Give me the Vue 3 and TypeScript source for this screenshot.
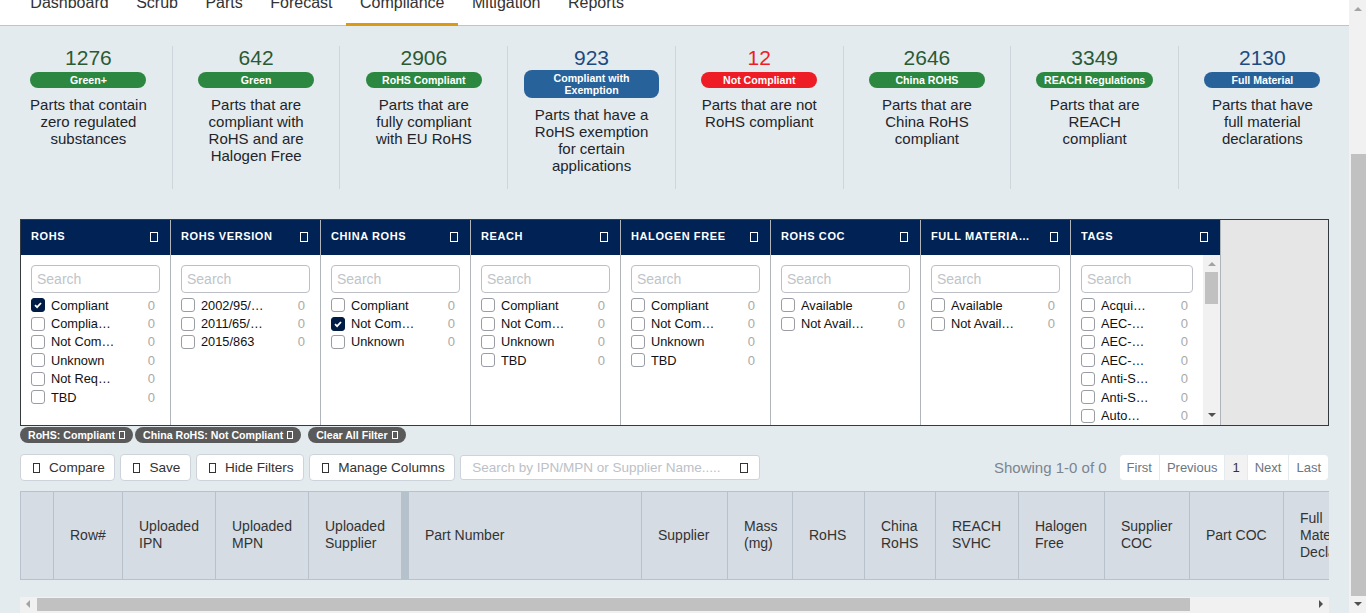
<script setup lang="ts">
interface Stat {
  count: number
  label: string
  text: string
  tone: 'green' | 'blue' | 'red'
  wide?: boolean
}

interface Filter {
  title: string
  options: string[]
  checked?: string
}

const tabs = ['Dashboard', 'Scrub', 'Parts', 'Forecast', 'Compliance', 'Mitigation', 'Reports']

const stats: Stat[] = [
  { count: 1276, label: 'Green+', text: 'Parts that contain zero regulated substances', tone: 'green' },
  { count: 642, label: 'Green', text: 'Parts that are compliant with RoHS and are Halogen Free', tone: 'green' },
  { count: 2906, label: 'RoHS Compliant', text: 'Parts that are fully compliant with EU RoHS', tone: 'green' },
  { count: 923, label: 'Compliant with Exemption', text: 'Parts that have a RoHS exemption for certain applications', tone: 'blue', wide: true },
  { count: 12, label: 'Not Compliant', text: 'Parts that are not RoHS compliant', tone: 'red' },
  { count: 2646, label: 'China ROHS', text: 'Parts that are China RoHS compliant', tone: 'green' },
  { count: 3349, label: 'REACH Regulations', text: 'Parts that are REACH compliant', tone: 'green' },
  { count: 2130, label: 'Full Material', text: 'Parts that have full material declarations', tone: 'blue' }
]

const complianceOptions = ['Compliant', 'Not Compliant', 'Unknown', 'TBD']
const availability = ['Available', 'Not Available']

const filters: Filter[] = [
  {
    title: 'RoHS',
    options: ['Compliant', 'Compliant with Exemption', 'Not Compliant', 'Unknown', 'Not Required', 'TBD'],
    checked: 'Compliant'
  },
  { title: 'RoHS Version', options: ['2002/95/EC', '2011/65/EU', '2015/863'] },
  { title: 'China RoHS', options: ['Compliant', 'Not Compliant', 'Unknown'], checked: 'Not Compliant' },
  { title: 'REACH', options: complianceOptions },
  { title: 'Halogen Free', options: complianceOptions },
  { title: 'RoHS COC', options: availability },
  { title: 'Full Material Declaration', options: availability },
  {
    title: 'Tags',
    options: ['Acquisition', 'AEC-Q100', 'AEC-Q101', 'AEC-Q200', 'Anti-Static', 'Anti-Surge', 'Automotive']
  }
]

const chips = [
  { label: 'RoHS: Compliant', clear: false },
  { label: 'China RoHS: Not Compliant', clear: false },
  { label: 'Clear All Filter', clear: true }
]

const actions = ['Compare', 'Save', 'Hide Filters', 'Manage Columns']

const pages = ['First', 'Previous', '1', 'Next', 'Last']

const columns = [
  '',
  'Row#',
  'Uploaded IPN',
  'Uploaded MPN',
  'Uploaded Supplier',
  'Part Number',
  'Supplier',
  'Mass (mg)',
  'RoHS',
  'China RoHS',
  'REACH SVHC',
  'Halogen Free',
  'Supplier COC',
  'Part COC',
  'Full Material Declaration'
]
</script>

<template>
  <div class="page">
    <div class="main">
      <nav class="tabs">
        <a v-for="tab in tabs" :key="tab" class="tab" :class="{ active: tab === 'Compliance' }">{{ tab }}</a>
      </nav>

      <section class="stats">
        <div v-for="stat in stats" :key="stat.label" class="stat">
          <div class="stat-count" :class="`count-${stat.tone}`">{{ stat.count }}</div>
          <div class="stat-badge" :class="[`badge-${stat.tone}`, { wide: stat.wide }]">{{ stat.label }}</div>
          <p class="stat-text">{{ stat.text }}</p>
        </div>
      </section>

      <section class="filters">
        <div v-for="filter in filters" :key="filter.title" class="filter">
          <header class="filter-head">
            <span class="filter-title">{{ filter.title }}</span>
            <span class="tofu"></span>
          </header>
          <div class="filter-body">
            <div class="filter-list">
              <input class="filter-search" type="text" placeholder="Search" />
              <label v-for="option in filter.options" :key="option" class="option">
                <span class="check" :class="{ on: option === filter.checked }">
                  <svg v-if="option === filter.checked" viewBox="0 0 12 12" width="12" height="12">
                    <path d="M3 6.2 5.1 8.2 9 4" fill="none" stroke="#fff" stroke-width="1.8" />
                  </svg>
                </span>
                <span class="option-name">{{ option }}</span>
                <span class="option-count">0</span>
              </label>
            </div>
            <div v-if="filter.title === 'Tags'" class="mini-bar">
              <span class="arrow up"></span>
              <span class="mini-thumb"></span>
              <span class="arrow down"></span>
            </div>
          </div>
        </div>
      </section>

      <div class="chips">
        <span v-for="chip in chips" :key="chip.label" class="chip" :class="{ clear: chip.clear }">
          {{ chip.label }}<span class="tofu small"></span>
        </span>
      </div>

      <div class="toolbar">
        <button v-for="action in actions" :key="action" class="action" type="button">
          <span class="tofu dark"></span>{{ action }}
        </button>
        <div class="part-search">
          <span class="part-search-text">Search by IPN/MPN or Supplier Name.....</span>
          <span class="tofu dark"></span>
        </div>
        <span class="showing">Showing 1-0 of 0</span>
        <div class="pager">
          <span v-for="page in pages" :key="page" class="page-link" :class="{ current: page === '1' }">{{ page }}</span>
        </div>
      </div>

      <div class="grid-wrap">
        <div class="grid-head">
          <div v-for="(col, i) in columns" :key="i" class="grid-cell">
            <span>{{ col }}</span>
          </div>
        </div>
      </div>

      <div class="h-scroll">
        <span class="arrow left"></span>
        <span class="h-thumb"></span>
        <span class="arrow right"></span>
      </div>
    </div>

    <div class="v-scroll">
      <span class="arrow up"></span>
      <span class="v-thumb"></span>
      <span class="arrow down"></span>
    </div>
  </div>
</template>

<style>
html,
body {
  margin: 0;
  overflow: hidden;
  background: #e4ebef;
}
</style>

<style scoped>
.page {
  display: flex;
  width: 1366px;
  height: 613px;
  overflow: hidden;
  font-family: "Liberation Sans", Arial, sans-serif;
  color: #212529;
  background: #e4ebef;
}

.main {
  width: 1349px;
  flex: none;
}

/* nav is scrolled most of the way out of view */
.tabs {
  display: flex;
  align-items: flex-end;
  box-sizing: border-box;
  height: 26px;
  padding-left: 16.6px;
  background: #fff;
  box-shadow: inset 0 -1px 0 #bcc4ce;
  overflow: hidden;
}

.tab {
  box-sizing: border-box;
  height: 42px;
  line-height: 38px;
  padding: 0 13.75px;
  font-size: 16px;
  color: #333;
  white-space: nowrap;
}

.tab.active {
  border-bottom: 3px solid #dc9a13;
}

.stats {
  display: grid;
  grid-template-columns: repeat(8, minmax(0, 1fr));
  height: 143px;
  margin: 20px 2.3px 0 5.1px;
}

.stat {
  display: flex;
  flex-direction: column;
  align-items: center;
  padding: 0 24px;
  text-align: center;
  border-right: 1px solid #cfd6db;
}

.stat:last-child {
  border-right-color: transparent;
}

.stat-count {
  font-size: 21px;
  line-height: 24px;
}

.count-green {
  color: #2a5a33;
}

.count-blue {
  color: #1d4a80;
}

.count-red {
  color: #ee1c25;
}

.stat-badge {
  box-sizing: border-box;
  flex: none;
  min-width: 116px;
  max-width: 135px;
  margin-top: 2px;
  padding: 2px 8px;
  border-radius: 8px;
  font-size: 10.6px;
  font-weight: 700;
  line-height: 12px;
  color: #fff;
  white-space: nowrap;
}

.stat-badge.wide {
  width: 135px;
  margin-top: 0;
  white-space: normal;
}

.badge-green {
  background: #2c8741;
}

.badge-blue {
  background: #28629b;
}

.badge-red {
  background: #ee1c25;
}

.stat-text {
  width: 119px;
  margin: 8px 0 0;
  font-size: 15px;
  line-height: 17px;
  color: #212529;
}

.filters {
  display: flex;
  height: 205px;
  margin: 30px 0 0 20px;
  width: 1307px;
  border: 1px solid #333a40;
  background: #e6e6e6;
  overflow: hidden;
}

.filter {
  box-sizing: border-box;
  width: 150px;
  flex: none;
  border-right: 1px solid #b0b4bb;
  background: #fff;
}

.filter-head {
  display: flex;
  align-items: center;
  justify-content: space-between;
  box-sizing: border-box;
  height: 35px;
  padding: 0 12px 4px 10px;
  background: #002255;
  color: #fff;
}

.filter-title {
  width: 100px;
  overflow: hidden;
  white-space: nowrap;
  text-overflow: ellipsis;
  font-size: 11px;
  font-weight: 700;
  letter-spacing: 0.6px;
  text-transform: uppercase;
}

.tofu {
  display: inline-block;
  box-sizing: border-box;
  flex: none;
  width: 8px;
  height: 10px;
  border: 1px solid currentColor;
  margin-top: 2px;
}

.tofu.small {
  width: 6px;
  height: 8px;
  margin: 0;
}

.tofu.dark {
  color: #333;
}

.action .tofu {
  width: 7px;
  margin-top: 1px;
}

.filter-body {
  display: flex;
  height: 170px;
  overflow: hidden;
}

.filter-list {
  box-sizing: border-box;
  flex: 1;
  min-width: 0;
  padding: 10px 10px 0;
}

.filter-search {
  box-sizing: border-box;
  display: block;
  width: 100%;
  height: 28px;
  padding: 0 5px;
  margin-bottom: 3px;
  border: 1px solid #bcc0c6;
  border-radius: 4px;
  font: 14px "Liberation Sans", Arial, sans-serif;
  outline: none;
}

.filter-search::placeholder {
  color: #c0c4c9;
}

.option {
  display: flex;
  align-items: center;
  height: 18.4px;
  font-size: 12.8px;
  color: #111;
}

.check {
  box-sizing: border-box;
  display: flex;
  align-items: center;
  justify-content: center;
  flex: none;
  width: 14px;
  height: 14px;
  margin-right: 6px;
  border: 1px solid #9a9da3;
  border-radius: 3px;
  background: #fff;
}

.check.on {
  background: #001b44;
  border-color: #001b44;
}

.option-name {
  flex: 1;
  min-width: 0;
  overflow: hidden;
  white-space: nowrap;
  text-overflow: ellipsis;
  margin-right: 32px;
}

.option-count {
  flex: none;
  padding-right: 5px;
  font-size: 13px;
  color: #a8aaa8;
}

.mini-bar {
  position: relative;
  flex: none;
  width: 17px;
  background: #f1f1f1;
}

.mini-thumb {
  position: absolute;
  top: 17px;
  left: 2px;
  width: 13px;
  height: 32px;
  background: #c1c1c1;
}

.arrow {
  position: absolute;
  width: 0;
  height: 0;
  border: 4px solid transparent;
}

.arrow.up {
  top: 7px;
  left: 50%;
  margin-left: -4px;
  border-top: 0;
  border-bottom-color: #a3a3a3;
}

.arrow.down {
  bottom: 7px;
  left: 50%;
  margin-left: -4px;
  border-bottom: 0;
  border-top-color: #505050;
}

.mini-bar .arrow.down {
  bottom: 8px;
}

.arrow.left {
  top: 3px;
  left: 6px;
  border-left: 0;
  border-right-color: #a3a3a3;
}

.arrow.right {
  top: 3px;
  right: 6px;
  border-right: 0;
  border-left-color: #505050;
}

.chips {
  display: flex;
  height: 16px;
  margin: 1px 0 0 20px;
}

.chip {
  display: flex;
  align-items: center;
  gap: 4px;
  padding: 0 8px;
  margin-right: 2px;
  border-radius: 8px;
  background: #5a5a5a;
  color: #fff;
  font-size: 10.6px;
  font-weight: 700;
  white-space: nowrap;
}

.chip.clear {
  margin-left: 5px;
}

.toolbar {
  display: flex;
  align-items: center;
  width: 1309px;
  height: 27px;
  margin: 11px 0 0 20px;
}

.action {
  display: flex;
  align-items: center;
  gap: 9px;
  box-sizing: border-box;
  height: 27px;
  padding: 0 9.5px 1px 12px;
  margin-right: 5px;
  background: #fff;
  border: 1px solid #cdd3da;
  border-radius: 4px;
  font: 13.6px "Liberation Sans", Arial, sans-serif;
  color: #333;
}

.part-search {
  display: flex;
  align-items: center;
  justify-content: space-between;
  box-sizing: border-box;
  width: 300px;
  height: 25px;
  padding: 0 11px 1px;
  background: #fff;
  border: 1px solid #cdd3da;
  border-radius: 3px;
  font-size: 13.5px;
}

.part-search-text {
  color: #bcc1c7;
}

.showing {
  margin-left: auto;
  margin-right: 13px;
  padding-bottom: 1px;
  font-size: 15px;
  color: #7a8590;
}

.pager {
  display: flex;
  height: 25px;
  margin-right: 1px;
  background: #fff;
  border-radius: 4px;
  overflow: hidden;
}

.page-link {
  padding: 0 7px;
  line-height: 25px;
  font-size: 13px;
  color: #6c7680;
  border-left: 1px solid #e4ebef;
}

.page-link:first-child {
  border-left: 0;
}

.page-link.current {
  background: #f2f2f2;
  color: #333;
}

.grid-wrap {
  width: 1309px;
  margin: 10px 0 0 20px;
  overflow: hidden;
}

.grid-head {
  display: grid;
  grid-template-columns: 34px 69px 93px 93px 100px 233px 86px 65px 72px 71px 83px 86px 85px 94px 90px;
  width: 1354px;
  height: 89px;
  box-sizing: border-box;
  background: #d5dce3;
  border: solid #b8c2cc;
  border-width: 1px 0;
}

.grid-cell {
  display: flex;
  align-items: center;
  box-sizing: border-box;
  padding: 0 16px 1px;
  font-size: 14px;
  line-height: 17px;
  color: #333;
  border-right: 1px solid #b8c2cc;
}

.grid-cell:first-child {
  border-left: 1px solid #b8c2cc;
}

.grid-cell:nth-child(5) {
  border-right: 8px solid #b5c2cb;
}

.h-scroll {
  position: relative;
  width: 1309px;
  height: 16px;
  margin: 17px 0 0 20px;
  background: #f1f1f1;
}

.h-thumb {
  position: absolute;
  top: 1px;
  left: 17px;
  width: 1153px;
  height: 13px;
  background: #c1c1c1;
}

.v-scroll {
  position: relative;
  flex: none;
  width: 17px;
  background: #f1f1f1;
}

.v-thumb {
  position: absolute;
  top: 154px;
  left: 2px;
  right: 0;
  height: 442px;
  background: #c1c1c1;
}
</style>
